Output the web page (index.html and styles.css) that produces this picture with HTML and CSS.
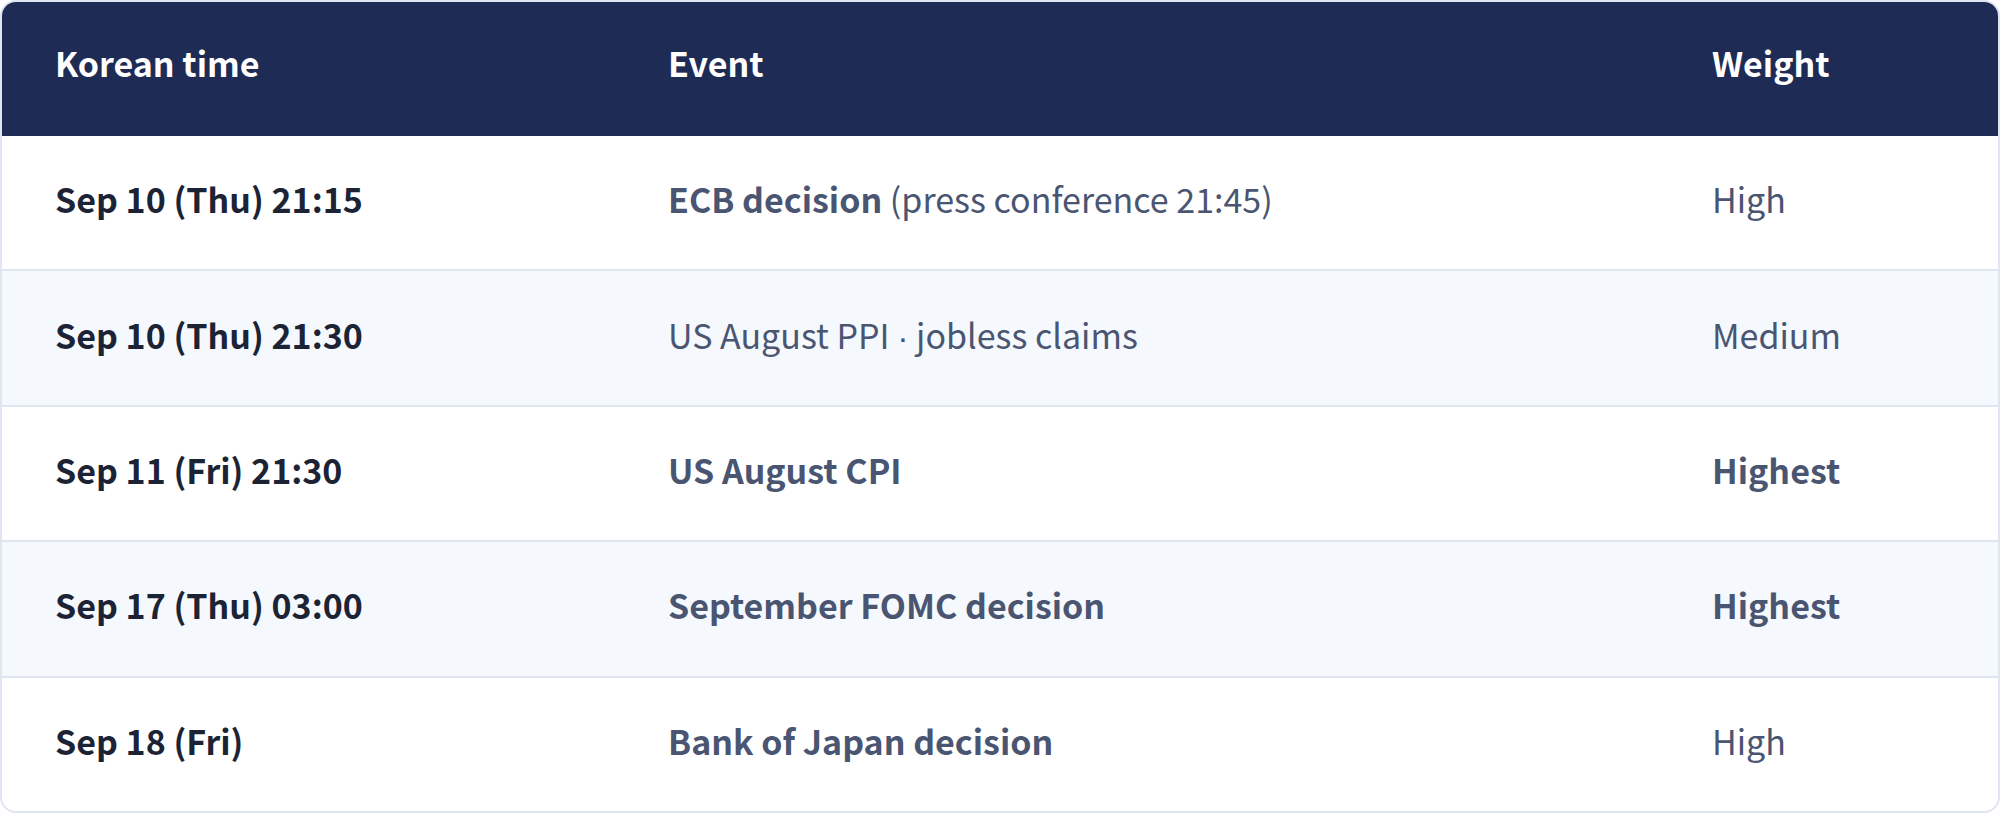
FILE: index.html
```html
<!DOCTYPE html>
<html lang="en">
<head>
<meta charset="utf-8">
<title>Schedule</title>
<link rel="stylesheet" href="styles.css">
</head>
<body>
<div class="card">
  <div class="row head">
    <div class="cell">Korean time</div>
    <div class="cell">Event</div>
    <div class="cell">Weight</div>
  </div>
  <div class="row">
    <div class="cell time">Sep 10 (Thu) 21:15</div>
    <div class="cell event"><strong>ECB decision</strong> (press conference 21:45)</div>
    <div class="cell weight">High</div>
  </div>
  <div class="row alt">
    <div class="cell time">Sep 10 (Thu) 21:30</div>
    <div class="cell event">US August PPI <span class="dot">·</span> jobless claims</div>
    <div class="cell weight">Medium</div>
  </div>
  <div class="row">
    <div class="cell time">Sep 11 (Fri) 21:30</div>
    <div class="cell event"><strong>US August CPI</strong></div>
    <div class="cell weight"><strong>Highest</strong></div>
  </div>
  <div class="row alt">
    <div class="cell time">Sep 17 (Thu) 03:00</div>
    <div class="cell event"><strong>September FOMC decision</strong></div>
    <div class="cell weight"><strong>Highest</strong></div>
  </div>
  <div class="row last">
    <div class="cell time">Sep 18 (Fri)</div>
    <div class="cell event"><strong>Bank of Japan decision</strong></div>
    <div class="cell weight">High</div>
  </div>
</div>
</body>
</html>
```
FILE: styles.css
```css
html, body {
  margin: 0;
  padding: 0;
  background: #ffffff;
}
body {
  font-family: "Noto Sans CJK KR", "Noto Sans", sans-serif;
  font-size: 34px;
}
.card {
  width: 2000px;
  box-sizing: border-box;
  border: 2px solid #dfe5f1;
  border-radius: 16px;
  overflow: hidden;
  background: #ffffff;
}
.row {
  display: grid;
  grid-template-columns: 613px 1044px 1fr;
  align-items: center;
  height: 135.4px;
  box-sizing: border-box;
  border-bottom: 2px solid #dfe5f1;
}
.row.last {
  border-bottom: none;
  height: 133.4px;
}
.row.alt {
  background: #f5f8fd;
}
.row.head {
  background: #1e2c55;
  color: #ffffff;
  font-weight: 700;
  height: 134px;
  border-bottom: none;
}
.cell {
  padding: 0 0 8px 53px;
  white-space: nowrap;
}
.head .cell {
  padding-bottom: 13px;
}
.time {
  font-weight: 700;
  color: #1c2334;
}
.event, .weight {
  color: #4a5572;
}
.dot {
  font-family: "Liberation Sans", sans-serif;
}
strong {
  font-weight: 700;
}
```
